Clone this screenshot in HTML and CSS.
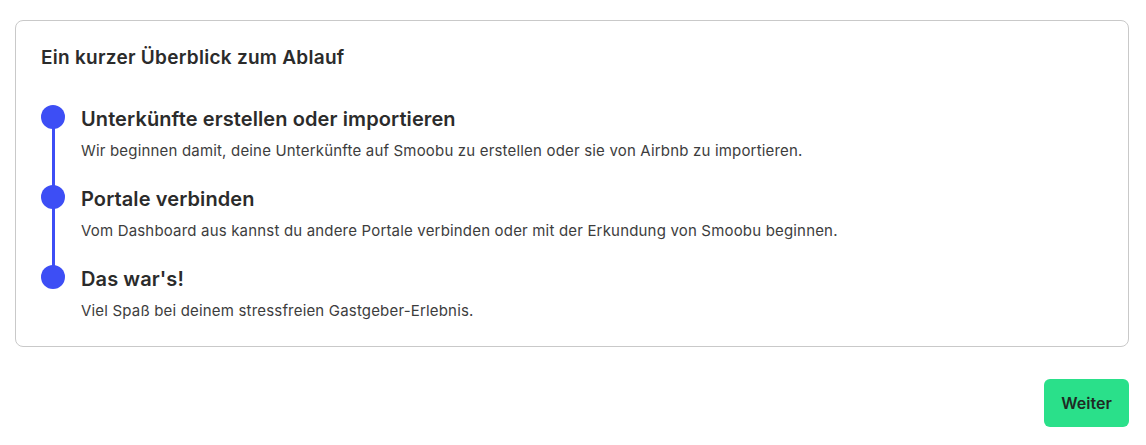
FILE: index.html
```html
<!DOCTYPE html>
<html lang="de">
<head>
    <meta charset="UTF-8">
    <meta name="viewport" content="width=device-width, initial-scale=1.0">
    <title>Ablauf</title>
    <link rel="stylesheet" href="styles.css">
</head>
<body>

    <div class="page">
        <div class="card">
            <h2 class="card-title">Ein kurzer Überblick zum Ablauf</h2>

            <ul class="steps">
                <li class="step">
                    <span class="dot"></span>
                    <div class="step-body">
                        <h3>Unterkünfte erstellen oder importieren</h3>
                        <p>Wir beginnen damit, deine Unterkünfte auf Smoobu zu erstellen oder sie von Airbnb zu importieren.</p>
                    </div>
                </li>
                <li class="step">
                    <span class="dot"></span>
                    <div class="step-body">
                        <h3>Portale verbinden</h3>
                        <p>Vom Dashboard aus kannst du andere Portale verbinden oder mit der Erkundung von Smoobu beginnen.</p>
                    </div>
                </li>
                <li class="step">
                    <span class="dot"></span>
                    <div class="step-body">
                        <h3>Das war's!</h3>
                        <p>Viel Spaß bei deinem stressfreien Gastgeber-Erlebnis.</p>
                    </div>
                </li>
            </ul>
        </div>

        <div class="actions">
            <button type="button" class="next-btn">Weiter</button>
        </div>
    </div>

</body>
</html>
```

FILE: styles.css
```css
body {
    margin: 0;
    font-family: Inter, "Open Sans", sans-serif;
    color: #2b2b2b;
    background: #fff;
}
.page {
    padding: 20px 17px 0 15px;
}
.card {
    border: 1px solid #c9c9c9;
    border-radius: 8px;
    padding: 25px 24px 23px 25px;
}
.card-title {
    margin: 0 0 34px 0;
    font-size: 19px;
    line-height: 24px;
    font-weight: 600;
    letter-spacing: 0.27px;
}
.steps {
    list-style: none;
    margin: 0;
    padding: 0;
}
.step {
    display: flex;
    gap: 16px;
    position: relative;
    padding-bottom: 21px;
}
.step:last-child {
    padding-bottom: 0;
}
.step:not(:last-child)::before {
    content: "";
    position: absolute;
    left: 11px;
    top: 13px;
    width: 3px;
    height: 82px;
    background: #3d4ef5;
}
.dot {
    flex: none;
    width: 24px;
    height: 24px;
    margin-top: 1px;
    border-radius: 50%;
    background: #3d4ef5;
    position: relative;
}
.step-body h3 {
    margin: 1px 0 6px 0;
    font-size: 20px;
    line-height: 28px;
    font-weight: 600;
    letter-spacing: 0.1px;
}
.step-body p {
    margin: 0;
    font-size: 15px;
    line-height: 24px;
    letter-spacing: 0.18px;
    color: #3d3d3d;
}
.actions {
    display: flex;
    justify-content: flex-end;
    margin-top: 32px;
}
.next-btn {
    background: #2ae08a;
    border: none;
    border-radius: 6px;
    width: 85px;
    height: 48px;
    font-family: Inter, sans-serif;
    font-size: 16px;
    font-weight: 600;
    color: #1f2a24;
    cursor: pointer;
}
```
